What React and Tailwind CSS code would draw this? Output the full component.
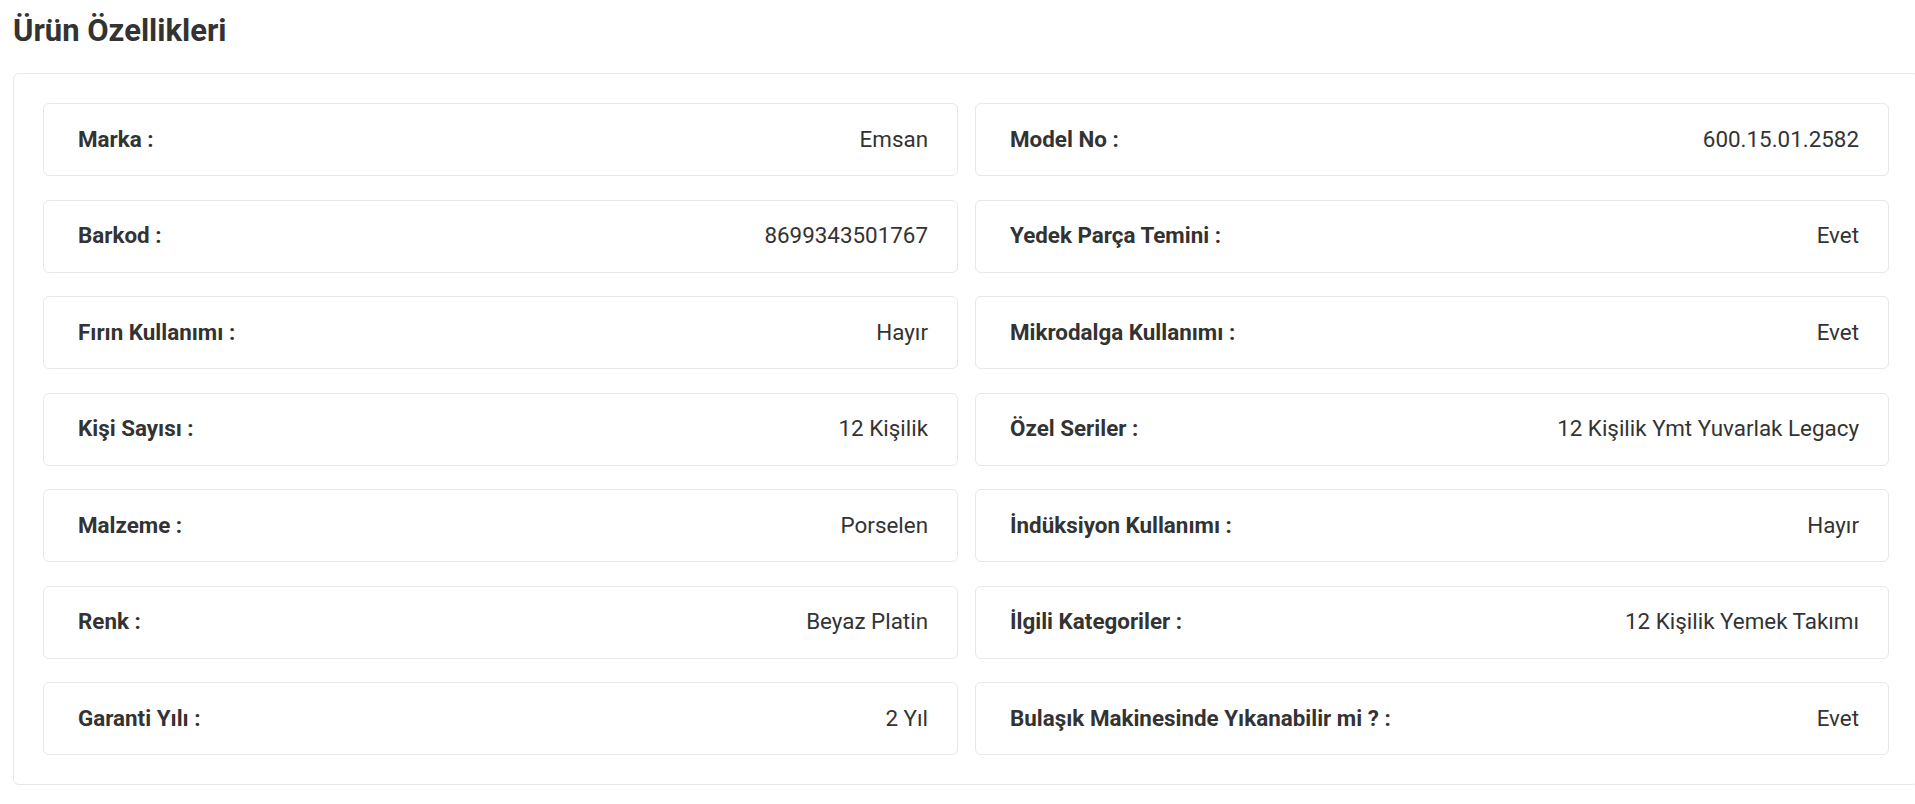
const rows = [
  ["Marka :", "Emsan", "Model No :", "600.15.01.2582"],
  ["Barkod :", "8699343501767", "Yedek Parça Temini :", "Evet"],
  ["Fırın Kullanımı :", "Hayır", "Mikrodalga Kullanımı :", "Evet"],
  ["Kişi Sayısı :", "12 Kişilik", "Özel Seriler :", "12 Kişilik Ymt Yuvarlak Legacy"],
  ["Malzeme :", "Porselen", "İndüksiyon Kullanımı :", "Hayır"],
  ["Renk :", "Beyaz Platin", "İlgili Kategoriler :", "12 Kişilik Yemek Takımı"],
  ["Garanti Yılı :", "2 Yıl", "Bulaşık Makinesinde Yıkanabilir mi ? :", "Evet"],
];

function Item({ label, value }) {
  return (
    <div className="flex h-[73px] items-center justify-between rounded-[6px] border border-[#e8e8e8] bg-white pl-[34px] pr-[29px]">
      <span className="font-bold">{label}</span>
      <span>{value}</span>
    </div>
  );
}

export default function App() {
  const items = rows.flatMap((r) => [[r[0], r[1]], [r[2], r[3]]]);
  return (
    <div className="min-h-[804px] w-[1915px] overflow-hidden bg-white pl-[13px] text-[#333333]" style={{ fontFamily: "Roboto, 'Noto Sans', sans-serif" }}>
      <h2 className="pt-[11px] text-[31px] font-bold leading-[40px]">Ürün Özellikleri</h2>
      <div className="mt-[22px] w-[1906px] rounded-[6px] border border-[#e8e8e8] p-[29px]">
        <div className="grid grid-cols-[915px_914px] gap-x-[17px] gap-y-[23.5px] text-[22.4px]">
          {items.map(([l, v], i) => (
            <Item key={i} label={l} value={v} />
          ))}
        </div>
      </div>
    </div>
  );
}
